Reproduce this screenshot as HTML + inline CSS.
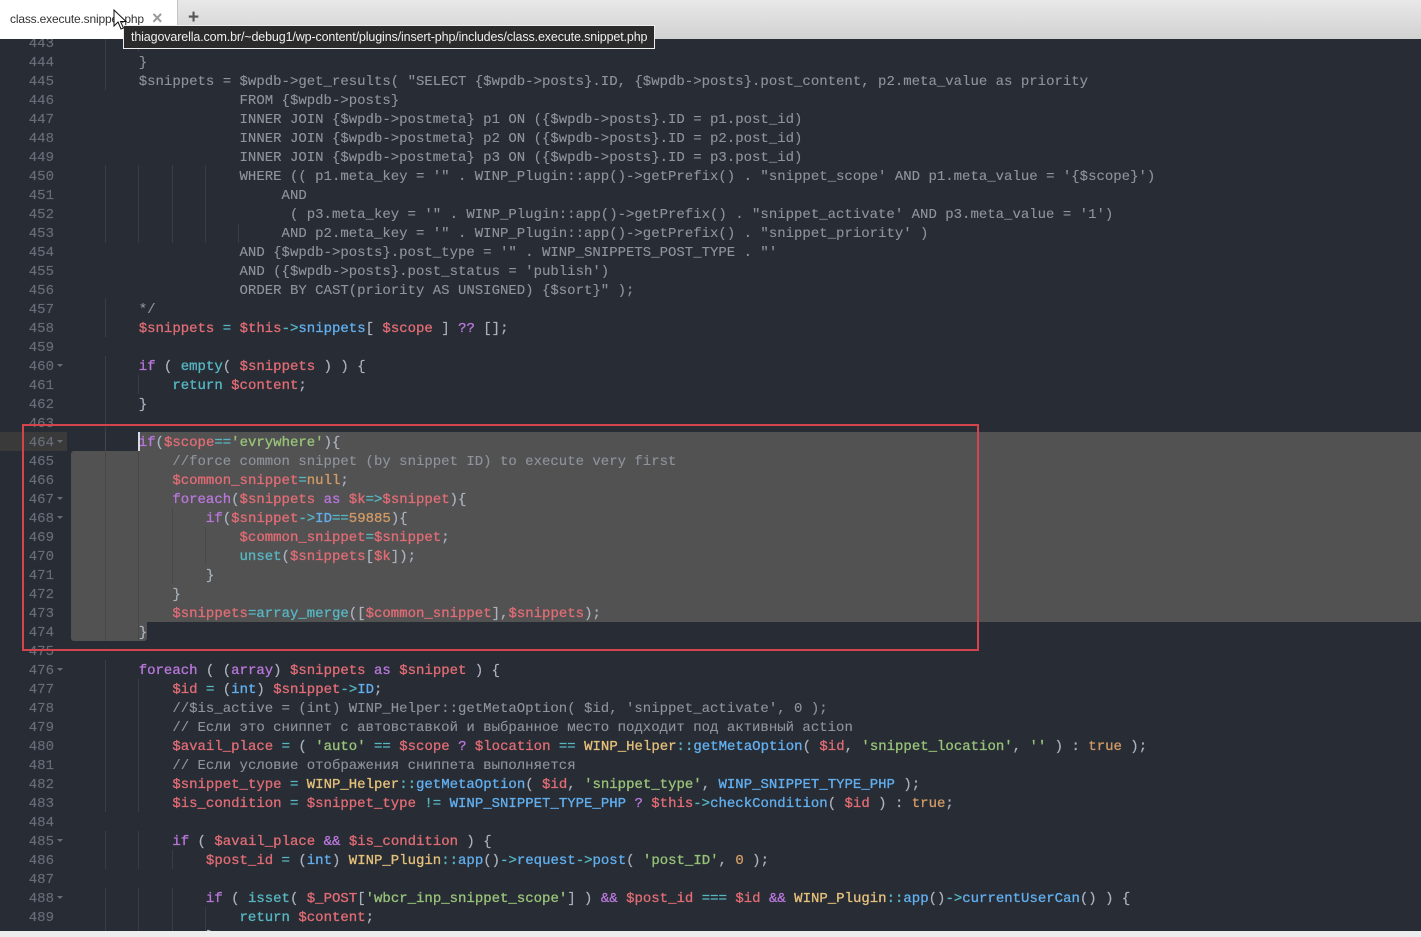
<!DOCTYPE html>
<html><head><meta charset="utf-8"><style>
html,body{margin:0;padding:0;width:1421px;height:937px;overflow:hidden;background:#282c34}
#wrap{position:relative;width:1421px;height:937px;overflow:hidden;background:#282c34}
#bar{position:absolute;left:0;top:0;width:1421px;height:39px;background:linear-gradient(#e8e8e8,#d2d2d2);z-index:5}
#tab{position:absolute;left:0;top:0;width:177px;height:39px;background:#fff;border-right:1px solid #c4c4c4;z-index:6}
#tabt{position:absolute;left:10px;top:12px;font:12px/14px "Liberation Sans",sans-serif;color:#333;letter-spacing:-.17px;white-space:nowrap}
#x{position:absolute;left:152px;top:10px;font:bold 18px/17px "Liberation Sans",sans-serif;color:#999}
#plus{position:absolute;left:188px;top:8px;font:bold 19px/19px "Liberation Sans",sans-serif;color:#555;z-index:6}
#tip{position:absolute;left:123px;top:25px;width:530px;height:22px;background:#2b2b2b;border:1px solid #eee;z-index:7;color:#eee;font:12.5px/22px "Liberation Sans",sans-serif;white-space:nowrap;text-indent:7px;letter-spacing:-.13px}
#sel1,#sel2,#sel3{position:absolute;background:#525252}
#sel1{left:139px;top:432px;width:1282px;height:19px}
#sel2{left:71px;top:451px;width:1350px;height:171px;border-radius:3px 0 0 0}
#sel3{left:71px;top:622px;width:76px;height:19px;border-radius:0 0 3px 3px}
#gh{position:absolute;left:0;top:432px;width:67px;height:19px;background:#3a3a3a}
#caret{position:absolute;left:138px;top:432px;width:2px;height:19px;background:#d8d8e8;z-index:3}
.g{position:absolute;width:1px;background:#3a3d45}
.h{position:absolute;width:1px;background:#484848}
pre{margin:0}
#num{position:absolute;left:0;top:35px;width:54px;margin:0;text-align:right;font:14px/19px "Liberation Mono",monospace;color:#676d79;-webkit-text-stroke:.15px}
#code{position:absolute;left:71.5px;top:35px;font:14px/19px "Liberation Mono","DejaVu Sans Mono",monospace;color:#abb2bf;white-space:pre;-webkit-text-stroke:.2px}
#code span{-webkit-text-stroke:.3px}
.v{color:#e06c75}.k{color:#b877db}.f{color:#56b6c2}.s{color:#98c379}.n{color:#d19a66}.c{color:#e5c07b}.b{color:#61afef}.m{color:#8f949c}
#code span.m{-webkit-text-stroke:.12px}
.t{position:absolute;left:57px;width:0;height:0;border-left:3px solid transparent;border-right:3px solid transparent;border-top:3px solid #686d78}
#box{position:absolute;left:22px;top:424px;width:953px;height:223px;border:2px solid #d5434c;z-index:4}
#foot{position:absolute;left:0;top:931px;width:1421px;height:6px;background:#ededed;z-index:5}
#cur{position:absolute;left:113px;top:9px;z-index:8}
</style></head><body><div id="wrap">
<div id="bar"></div>
<div id="tab"><div id="tabt">class.execute.snippet.php</div><div id="x">×</div></div>
<div id="plus">+</div>
<div id="tip">thiagovarella.com.br/~debug1/wp-content/plugins/insert-php/includes/class.execute.snippet.php</div>
<svg id="cur" width="14" height="22" viewBox="0 0 14 22"><path d="M1 1V17L5 13L8 20L10.5 19L7.5 12.5H13Z" fill="#fff" stroke="#111" stroke-width="1"/></svg>
<div id="gh"></div><div id="sel1"></div><div id="sel2"></div><div id="sel3"></div><div id="caret"></div>
<div class="g" style="left:105px;top:39px;height:51px"></div>
<div class="g" style="left:105px;top:165px;height:78px"></div>
<div class="g" style="left:105px;top:298px;height:39px"></div>
<div class="g" style="left:105px;top:356px;height:76px"></div>
<div class="h" style="left:105px;top:432px;height:209px"></div>
<div class="g" style="left:105px;top:660px;height:152px"></div>
<div class="g" style="left:105px;top:831px;height:38px"></div>
<div class="g" style="left:105px;top:888px;height:43px"></div>
<div class="g" style="left:138px;top:39px;height:13px"></div>
<div class="g" style="left:138px;top:165px;height:78px"></div>
<div class="g" style="left:138px;top:375px;height:19px"></div>
<div class="h" style="left:138px;top:451px;height:190px"></div>
<div class="g" style="left:138px;top:679px;height:133px"></div>
<div class="g" style="left:138px;top:831px;height:38px"></div>
<div class="g" style="left:138px;top:888px;height:43px"></div>
<div class="g" style="left:172px;top:165px;height:78px"></div>
<div class="h" style="left:172px;top:508px;height:76px"></div>
<div class="g" style="left:172px;top:850px;height:19px"></div>
<div class="g" style="left:172px;top:888px;height:43px"></div>
<div class="g" style="left:205px;top:165px;height:78px"></div>
<div class="h" style="left:205px;top:527px;height:38px"></div>
<div class="g" style="left:205px;top:907px;height:24px"></div>
<div class="g" style="left:238px;top:224px;height:19px"></div>
<pre id="num">443
444
445
446
447
448
449
450
451
452
453
454
455
456
457
458
459
460
461
462
463
464
465
466
467
468
469
470
471
472
473
474
475
476
477
478
479
480
481
482
483
484
485
486
487
488
489</pre>
<i class="t" style="top:364px"></i><i class="t" style="top:440px"></i><i class="t" style="top:497px"></i><i class="t" style="top:516px"></i><i class="t" style="top:668px"></i><i class="t" style="top:839px"></i><i class="t" style="top:896px"></i>
<pre id="code">

        <span class="m">}</span>
        <span class="m">$snippets = $wpdb-&gt;get_results( "SELECT {$wpdb-&gt;posts}.ID, {$wpdb-&gt;posts}.post_content, p2.meta_value as priority</span>
                    <span class="m">FROM {$wpdb-&gt;posts}</span>
                    <span class="m">INNER JOIN {$wpdb-&gt;postmeta} p1 ON ({$wpdb-&gt;posts}.ID = p1.post_id)</span>
                    <span class="m">INNER JOIN {$wpdb-&gt;postmeta} p2 ON ({$wpdb-&gt;posts}.ID = p2.post_id)</span>
                    <span class="m">INNER JOIN {$wpdb-&gt;postmeta} p3 ON ({$wpdb-&gt;posts}.ID = p3.post_id)</span>
                    <span class="m">WHERE (( p1.meta_key = '" . WINP_Plugin::app()-&gt;getPrefix() . "snippet_scope' AND p1.meta_value = '{$scope}')</span>
                         <span class="m">AND</span>
                          <span class="m">( p3.meta_key = '" . WINP_Plugin::app()-&gt;getPrefix() . "snippet_activate' AND p3.meta_value = '1')</span>
                         <span class="m">AND p2.meta_key = '" . WINP_Plugin::app()-&gt;getPrefix() . "snippet_priority' )</span>
                    <span class="m">AND {$wpdb-&gt;posts}.post_type = '" . WINP_SNIPPETS_POST_TYPE . "'</span>
                    <span class="m">AND ({$wpdb-&gt;posts}.post_status = 'publish')</span>
                    <span class="m">ORDER BY CAST(priority AS UNSIGNED) {$sort}" );</span>
        <span class="m">*/</span>
        <span class="v">$snippets</span> <span class="f">=</span> <span class="v">$this</span><span class="f">-&gt;</span><span class="b">snippets</span>[ <span class="v">$scope</span> ] <span class="k">??</span> [];

        <span class="k">if</span> ( <span class="f">empty</span>( <span class="v">$snippets</span> ) ) {
            <span class="f">return</span> <span class="v">$content</span>;
        }

        <span class="k">if</span>(<span class="v">$scope</span><span class="f">==</span><span class="s">'evrywhere'</span>){
            <span class="m">//force common snippet (by snippet ID) to execute very first</span>
            <span class="v">$common_snippet</span><span class="f">=</span><span class="n">null</span>;
            <span class="k">foreach</span>(<span class="v">$snippets</span> <span class="k">as</span> <span class="v">$k</span><span class="f">=&gt;</span><span class="v">$snippet</span>){
                <span class="k">if</span>(<span class="v">$snippet</span><span class="f">-&gt;</span><span class="b">ID</span><span class="f">==</span><span class="n">59885</span>){
                    <span class="v">$common_snippet</span><span class="f">=</span><span class="v">$snippet</span>;
                    <span class="f">unset</span>(<span class="v">$snippets</span>[<span class="v">$k</span>]);
                }
            }
            <span class="v">$snippets</span><span class="f">=</span><span class="f">array_merge</span>([<span class="v">$common_snippet</span>],<span class="v">$snippets</span>);
        }

        <span class="k">foreach</span> ( (<span class="k">array</span>) <span class="v">$snippets</span> <span class="k">as</span> <span class="v">$snippet</span> ) {
            <span class="v">$id</span> <span class="f">=</span> (<span class="b">int</span>) <span class="v">$snippet</span><span class="f">-&gt;</span><span class="b">ID</span>;
            <span class="m">//$is_active = (int) WINP_Helper::getMetaOption( $id, 'snippet_activate', 0 );</span>
            <span class="m">// Если это сниппет с автовставкой и выбранное место подходит под активный action</span>
            <span class="v">$avail_place</span> <span class="f">=</span> ( <span class="s">'auto'</span> <span class="f">==</span> <span class="v">$scope</span> <span class="k">?</span> <span class="v">$location</span> <span class="f">==</span> <span class="c">WINP_Helper</span><span class="f">::</span><span class="b">getMetaOption</span>( <span class="v">$id</span>, <span class="s">'snippet_location'</span>, <span class="s">''</span> ) : <span class="n">true</span> );
            <span class="m">// Если условие отображения сниппета выполняется</span>
            <span class="v">$snippet_type</span> <span class="f">=</span> <span class="c">WINP_Helper</span><span class="f">::</span><span class="b">getMetaOption</span>( <span class="v">$id</span>, <span class="s">'snippet_type'</span>, <span class="b">WINP_SNIPPET_TYPE_PHP</span> );
            <span class="v">$is_condition</span> <span class="f">=</span> <span class="v">$snippet_type</span> <span class="f">!=</span> <span class="b">WINP_SNIPPET_TYPE_PHP</span> <span class="k">?</span> <span class="v">$this</span><span class="f">-&gt;</span><span class="b">checkCondition</span>( <span class="v">$id</span> ) : <span class="n">true</span>;

            <span class="k">if</span> ( <span class="v">$avail_place</span> <span class="k">&amp;&amp;</span> <span class="v">$is_condition</span> ) {
                <span class="v">$post_id</span> <span class="f">=</span> (<span class="b">int</span>) <span class="c">WINP_Plugin</span><span class="f">::</span><span class="b">app</span>()<span class="f">-&gt;</span><span class="b">request</span><span class="f">-&gt;</span><span class="b">post</span>( <span class="s">'post_ID'</span>, <span class="n">0</span> );

                <span class="k">if</span> ( <span class="f">isset</span>( <span class="v">$_POST</span>[<span class="s">'wbcr_inp_snippet_scope'</span>] ) <span class="k">&amp;&amp;</span> <span class="v">$post_id</span> <span class="f">===</span> <span class="v">$id</span> <span class="k">&amp;&amp;</span> <span class="c">WINP_Plugin</span><span class="f">::</span><span class="b">app</span>()<span class="f">-&gt;</span><span class="b">currentUserCan</span>() ) {
                    <span class="f">return</span> <span class="v">$content</span>;
                }</pre>
<div id="box"></div>
<div id="foot"></div>
</div></body></html>
